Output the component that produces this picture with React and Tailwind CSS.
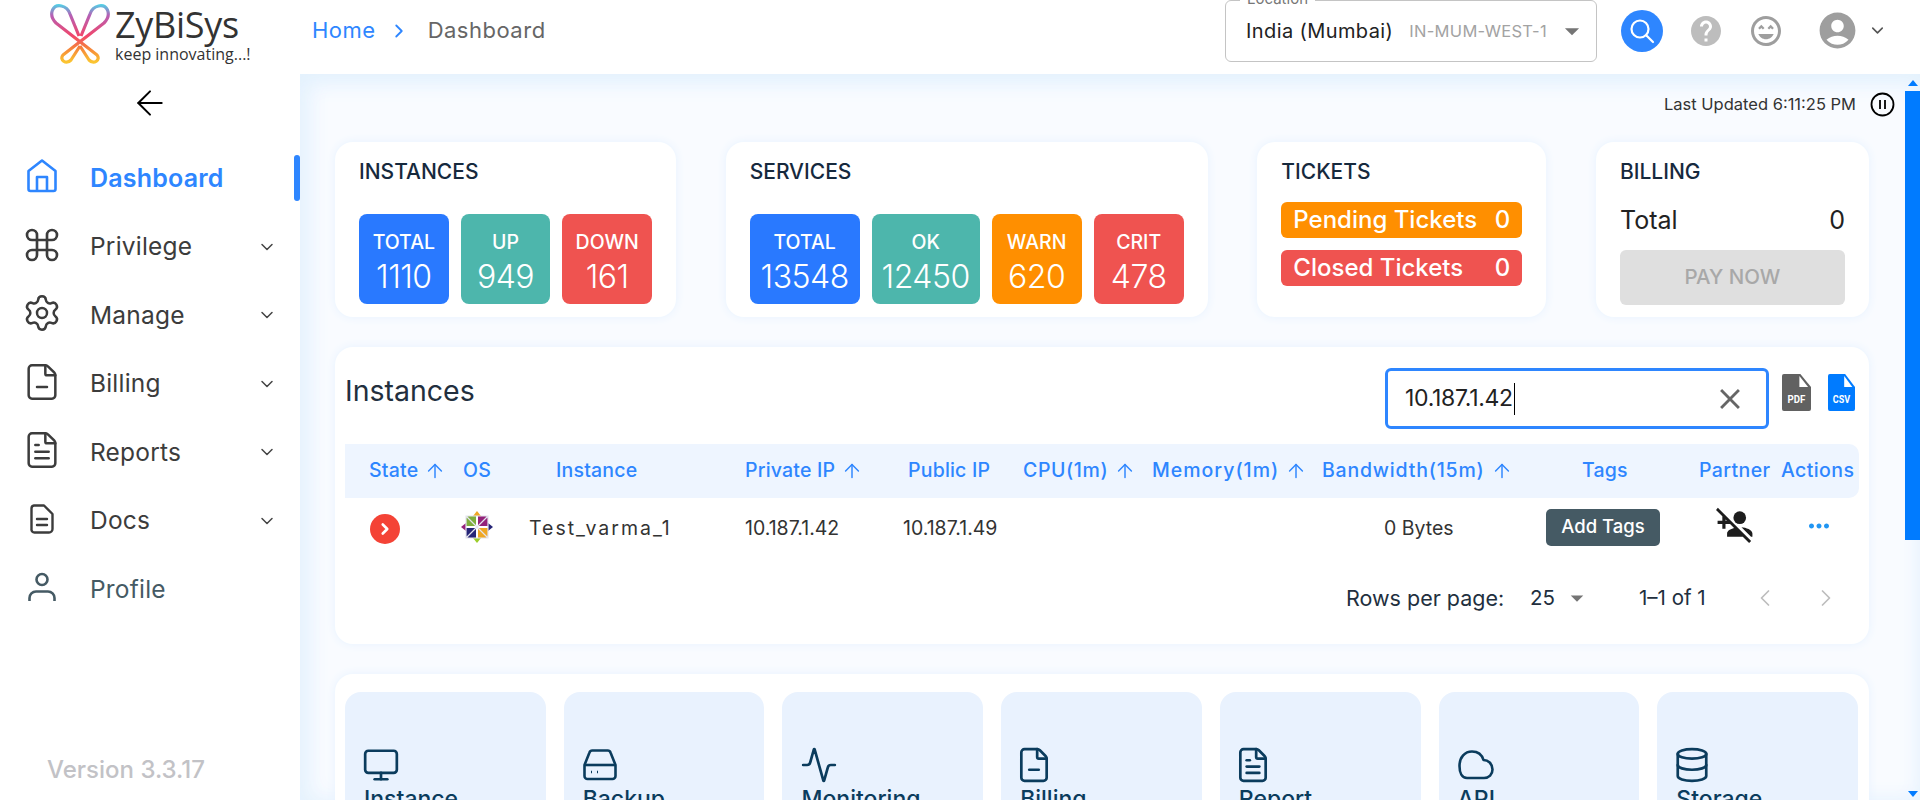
import React from 'react';
import { Command, Settings, FileMinus, FileText, ChevronDown, ChevronLeft, ChevronRight, ArrowLeft, ArrowUp, Monitor, Activity, Database } from 'lucide-react';
import { MdHelp, MdOutlineSentimentVerySatisfied, MdAccountCircle, MdArrowDropDown, MdClose, MdPersonAddDisabled, MdMoreHoriz } from 'react-icons/md';

const cols = 'grid grid-cols-[118px_67px_215px_158px_120px_129px_170px_224px_153px_84px_76px] items-center';

const Logo = () => (
  <svg width="62" height="62" viewBox="0 0 62 62" fill="none" strokeWidth="3.2" strokeLinejoin="round">
    <defs>
      <linearGradient id="zy" gradientUnits="userSpaceOnUse" x1="0" y1="2" x2="0" y2="60">
        <stop offset="0" stopColor="#4dd4e8" />
        <stop offset="0.2" stopColor="#b65fb4" />
        <stop offset="0.55" stopColor="#f0476c" />
        <stop offset="0.75" stopColor="#f5803c" />
        <stop offset="1" stopColor="#fbc531" />
      </linearGradient>
    </defs>
    <path stroke="url(#zy)" d="M29 34 L20 12 C17 3 6 1 2.500 8 C0.500 13 2 17 6 21 L47 53 C51 58 44 63 39 58 L30 44" />
    <path stroke="url(#zy)" d="M31 34 L40 12 C43 3 54 1 57.500 8 C59.500 13 58 17 54 21 L13 53 C9 58 16 63 21 58 L30 44" />
  </svg>
);

const HomeIcon = () => (
  <svg width="30" height="34" viewBox="0 0 30 34" fill="none" stroke="#2e86ff" strokeWidth="2.6" strokeLinejoin="round">
    <path d="M1.500 12 L15 1.500 L28.500 12 V30 a2 2 0 0 1 -2 2 H3.500 a2 2 0 0 1 -2 -2 Z" />
    <path d="M10 32 V18 H20 V32" />
  </svg>
);

const DocsIcon = () => (
  <svg width="24" height="30" viewBox="0 0 24 30" fill="none" stroke="#3c3c3c" strokeWidth="2.4" strokeLinejoin="round" strokeLinecap="round">
    <path d="M4 1.500 H14 L22.500 10 V25 a3.500 3.500 0 0 1 -3.500 3.500 H4.500 A3 3 0 0 1 1.500 25 V4.500 A3 3 0 0 1 4 1.500 Z" />
    <path d="M7 15 H17 M7 21 H17" />
  </svg>
);

const ProfileIcon = () => (
  <svg width="28" height="30" viewBox="0 0 28 30" fill="none" stroke="#455a64" strokeWidth="2.6">
    <circle cx="14" cy="7.500" r="5.500" />
    <path d="M1.500 29 V26 a6.500 6.500 0 0 1 6.500 -6.500 H20 a6.500 6.500 0 0 1 6.500 6.500 V29" />
  </svg>
);

const SearchIcon = () => (
  <svg width="26" height="26" viewBox="0 0 26 26" fill="none" stroke="#fff" strokeWidth="2.200" strokeLinecap="round">
    <circle cx="11" cy="11" r="8.500" />
    <path d="M17.500 17.500 L24 24" />
  </svg>
);

const PauseRing = () => (
  <svg width="25" height="25" viewBox="0 0 25 25" fill="none" stroke="#000" strokeWidth="1.800">
    <circle cx="12.500" cy="12.500" r="11" />
    <path d="M10 8 V17 M15 8 V17" />
  </svg>
);

const CentOS = () => (
  <svg width="32" height="32" viewBox="0 0 32 32">
    <path fill="#efa724" d="M16 0 L20 5 H12 Z" />
    <path fill="#9ccd2a" d="M16 32 L12 27 H20 Z" />
    <path fill="#932279" d="M0 16 L5 12 V20 Z" />
    <path fill="#262577" d="M32 16 L27 20 V12 Z" />
    <rect x="5" y="5" width="10" height="10" fill="#7fae3c" />
    <rect x="17" y="5" width="10" height="10" fill="#932279" />
    <rect x="5" y="17" width="10" height="10" fill="#262577" />
    <rect x="17" y="17" width="10" height="10" fill="#efa724" />
    <path stroke="#e4e4ee" strokeWidth="1.200" fill="none" d="M5 5 L27 27 M27 5 L5 27 M5 5 H27 V27 H5 Z" />
  </svg>
);

const FileBadge = ({ bg, label, width }) => (
  <svg width={width} height="37" viewBox="0 0 30 37" preserveAspectRatio="none">
    <path fill={bg} d="M2 0 H19 L30 13 V35 a2 2 0 0 1 -2 2 H2 a2 2 0 0 1 -2 -2 V2 a2 2 0 0 1 2 -2 Z" />
    <path fill="#fff" d="M18 2 L27 13 H18 Z" />
    <text x="15" y="29" textAnchor="middle" fill="#fff" fontSize="10" fontWeight="700" fontFamily="Roboto, sans-serif">{label}</text>
  </svg>
);

const BackupIcon = () => (
  <svg width="34" height="32" viewBox="0 0 34 32" fill="none" stroke="#0b3c5d" strokeWidth="2.600" strokeLinejoin="round">
    <path d="M1.500 16 L6.500 3.500 a3 3 0 0 1 3 -2 H24.500 a3 3 0 0 1 3 2 L32.500 16 V27 a3 3 0 0 1 -3 3 H4.500 a3 3 0 0 1 -3 -3 Z" />
    <path d="M1.500 16 H32.500" />
    <path d="M8 23 H9 M14 23 H15" />
  </svg>
);

const CloudIcon = () => (
  <svg width="36" height="30" viewBox="0 0 36 30" fill="none" stroke="#0b3c5d" strokeWidth="2.600" strokeLinejoin="round">
    <path d="M9 28 C4 28 1.500 23 1.500 16 C1.500 7 7 1.500 14 1.500 C20 1.500 24 5 25.500 10 C30 10 34.500 13.500 34.500 19.500 C34.500 24.500 31 28 26 28 Z" />
  </svg>
);

const menu = [
  { label: 'Dashboard', icon: <HomeIcon />, active: true },
  { label: 'Privilege', icon: <Command size={40} strokeWidth={1.6} color="#3c3c3c" />, sub: true },
  { label: 'Manage', icon: <Settings size={42} strokeWidth={1.5} color="#3c3c3c" />, sub: true },
  { label: 'Billing', icon: <FileMinus size={40} strokeWidth={1.5} color="#3c3c3c" />, sub: true },
  { label: 'Reports', icon: <FileText size={40} strokeWidth={1.5} color="#3c3c3c" />, sub: true },
  { label: 'Docs', icon: <DocsIcon />, sub: true },
  { label: 'Profile', icon: <ProfileIcon />, muted: true },
];

const StatBox = ({ label, value, color, width }) => (
  <div className={`${color} ${width} h-[90px] rounded-lg text-white flex flex-col items-center justify-center pt-[7px]`}>
    <div className="text-[19.5px] font-medium leading-[24px]">{label}</div>
    <div className="text-[32px] font-light leading-[38px] tracking-[-0.5px] mt-[4px]">{value}</div>
  </div>
);

const Card = ({ className, children }) => (
  <div className={`bg-white rounded-[18px] shadow-[0_0_10px_#e6f2fe] ${className}`}>{children}</div>
);

const Title = ({ children }) => (
  <h3 className="text-[21px] font-medium text-[#16293d] leading-[30px]">{children}</h3>
);

const HeadCell = ({ children, arrow, className = 'tracking-[0.2px]' }) => (
  <div className={`flex items-center text-[19.5px] font-medium text-[#2e86ff] whitespace-nowrap ${className}`}>
    {children}
    {arrow && <ArrowUp size={22} strokeWidth={1.6} className="ml-[6px]" />}
  </div>
);

const tiles = [
  { label: 'Instance', icon: <Monitor size={38} strokeWidth={1.7} color="#0b3c5d" className="-ml-[2px]" /> },
  { label: 'Backup', icon: <BackupIcon /> },
  { label: 'Monitoring', icon: <Activity size={38} strokeWidth={1.7} color="#0b3c5d" className="-ml-[1px]" /> },
  { label: 'Billing', icon: <FileMinus size={38} strokeWidth={1.7} color="#0b3c5d" className="-ml-[5px]" /> },
  { label: 'Report', icon: <FileText size={38} strokeWidth={1.7} color="#0b3c5d" className="-ml-[5px]" /> },
  { label: 'API', icon: <CloudIcon /> },
  { label: 'Storage', icon: <Database size={38} strokeWidth={1.7} color="#0b3c5d" className="-ml-[3px]" /> },
];

export default function App() {
  return (
    <div className="h-[800px] overflow-hidden flex flex-col bg-white font-[Inter,sans-serif] text-[#222]">
      <header className="h-[74px] shrink-0 flex">
        <div className="w-[312px] shrink-0 pl-[50px] pt-[2px] flex">
          <Logo />
          <div className="ml-[3px] font-['Open_Sans',sans-serif] text-[#333]">
            <div className="text-[36px] h-[38px] leading-[38px] mt-[4px] tracking-[-0.3px]">ZyBiSys</div>
            <div className="text-[16px] h-[16px] leading-[16px] mt-[2px] whitespace-nowrap">keep innovating...!</div>
          </div>
        </div>
        <nav className="flex items-center h-[61px] text-[22px] tracking-[0.5px]">
          <span className="text-[#2e86ff]">Home</span>
          <ChevronRight size={22} className="text-[#2e86ff] ml-[12px] mr-[18px]" />
          <span className="text-[#666]">Dashboard</span>
        </nav>
        <div className="ml-auto flex items-start">
          <div className="relative w-[372px] h-[62px] border border-[#c4c4c4] rounded-[6px] flex items-center pl-[20px] pr-[16px]">
            <span className="absolute left-[14px] -top-[11px] bg-white px-[7px] text-[15px] leading-[18px] text-[#777]">Location</span>
            <span className="text-[20px] tracking-[0.4px] whitespace-nowrap">India (Mumbai)</span>
            <span className="text-[16.5px] tracking-[0.3px] text-[#a3a3a3] ml-[16px] whitespace-nowrap">IN-MUM-WEST-1</span>
            <MdArrowDropDown size={34} className="text-[#757575] ml-auto -mr-[9px]" />
          </div>
          <div className="w-[42px] h-[42px] rounded-full bg-[#2e86ff] flex items-center justify-center ml-[24px] mt-[10px]"><SearchIcon /></div>
          <MdHelp size={36} className="text-[#bdbdbd] ml-[25px] mt-[13px]" />
          <MdOutlineSentimentVerySatisfied size={36} className="text-[#9e9e9e] ml-[24px] mt-[13px]" />
          <MdAccountCircle size={43} className="text-[#9e9e9e] ml-[32px] mt-[9px]" />
          <ChevronDown size={19} className="text-[#555] ml-[9px] mt-[21px] mr-[33px]" />
        </div>
      </header>

      <div className="flex-1 flex min-h-0">
        <aside className="w-[300px] shrink-0 relative">
          <div className="flex justify-center pt-[9px] h-[70px]">
            <ArrowLeft size={40} strokeWidth={1.2} className="text-black" />
          </div>
          <ul>
            {menu.map((m) => (
              <li key={m.label} className="relative h-[68.5px] flex items-center pl-[22px]">
                <span className="w-[40px] h-[44px] flex items-center justify-center shrink-0 -mt-[4px]">{m.icon}</span>
                <span className={`ml-[28px] ${m.active ? 'text-[#2e86ff] font-semibold text-[25px] tracking-[0.2px]' : m.muted ? 'text-[#455a64] text-[24.5px] tracking-[0.2px]' : 'text-[#3c3c3c] text-[24.5px] tracking-[0.2px]'}`}>{m.label}</span>
                {m.sub && <ChevronDown size={20} strokeWidth={1.8} className="absolute left-[257px] text-[#444]" />}
                {m.active && <span className="absolute right-0 top-[11px] w-[6px] h-[46px] rounded-full bg-[#2e86ff]" />}
              </li>
            ))}
          </ul>
          <div className="absolute left-[47px] top-[678px] text-[24px] font-medium text-[#c2c2c6]">Version 3.3.17</div>
        </aside>

        <main className="flex-1 flex min-w-0 bg-[#f9fbff] shadow-[inset_0_8px_22px_#e3f1fd,inset_10px_0_22px_#e9f4fe]">
          <div className="flex-1 min-w-0 pl-[35px] pr-[36px] pt-[18px]">
            <div className="h-[24px] flex items-center justify-end text-[16.500px] text-[#333] -mr-[26px]">
              <span className="whitespace-nowrap">Last Updated 6:11:25 PM</span>
              <span className="ml-[14px]"><PauseRing /></span>
            </div>

            <div className="flex justify-between mt-[26px]">
              <Card className="w-[341px] h-[175px] pt-[15px] px-[24px]">
                <Title>INSTANCES</Title>
                <div className="flex gap-[12px] mt-[27px]">
                  <StatBox label="TOTAL" value="1110" color="bg-[#2979ff]" width="w-[90px]" />
                  <StatBox label="UP" value="949" color="bg-[#4db6ac]" width="w-[90px]" />
                  <StatBox label="DOWN" value="161" color="bg-[#ef5350]" width="w-[90px]" />
                </div>
              </Card>
              <Card className="w-[482px] h-[175px] pt-[15px] px-[24px]">
                <Title>SERVICES</Title>
                <div className="flex gap-[12px] mt-[27px]">
                  <StatBox label="TOTAL" value="13548" color="bg-[#2979ff]" width="w-[110px]" />
                  <StatBox label="OK" value="12450" color="bg-[#4db6ac]" width="w-[108px]" />
                  <StatBox label="WARN" value="620" color="bg-[#ff8f00]" width="w-[90px]" />
                  <StatBox label="CRIT" value="478" color="bg-[#ef5350]" width="w-[90px]" />
                </div>
              </Card>
              <Card className="w-[289px] h-[175px] pt-[15px] px-[24px]">
                <Title>TICKETS</Title>
                <div className="h-[36px] mt-[15px] rounded-[6px] bg-[#ff8f00] text-white text-[24px] font-medium flex items-center justify-between px-[12px]">
                  <span className="whitespace-nowrap">Pending Tickets</span><span>0</span>
                </div>
                <div className="h-[36px] mt-[12px] rounded-[6px] bg-[#ef5350] text-white text-[24px] font-medium flex items-center justify-between px-[12px]">
                  <span className="whitespace-nowrap">Closed Tickets</span><span>0</span>
                </div>
              </Card>
              <Card className="w-[273px] h-[175px] pt-[15px] px-[24px]">
                <Title>BILLING</Title>
                <div className="flex justify-between items-center mt-[16px] h-[36px] text-[25px] text-[#222]">
                  <span>Total</span><span>0</span>
                </div>
                <div className="h-[55px] mt-[11px] rounded-[6px] bg-[#dfdfdf] text-[#a8a8a8] text-[20.5px] font-medium flex items-center justify-center">PAY NOW</div>
              </Card>
            </div>

            <Card className="h-[297px] mt-[30px] pl-[10px] pr-[10px] pt-[21px]">
              <div className="flex items-start h-[76px]">
                <h2 className="text-[28.500px] leading-[46px] text-[#222f3e]">Instances</h2>
                <div className="ml-auto flex items-center w-[384px] h-[61px] border-[3px] border-[#2e86ff] rounded-[6px] pl-[17px] pr-[19px]">
                  <span className="text-[23px] tracking-[-0.3px] text-[#222]">10.187.1.42</span>
                  <span className="w-px h-[32px] bg-black ml-[1px]" />
                  <MdClose size={34} className="ml-auto text-[#666]" />
                </div>
                <div className="ml-[13px] mt-[6px]"><FileBadge bg="#616161" label="PDF" width="29" /></div>
                <div className="ml-[17px] mt-[6px] mr-[4px]"><FileBadge bg="#007bff" label="CSV" width="27" /></div>
              </div>
              <div className={`${cols} h-[54px] bg-[#eef5ff] rounded-r-[10px]`}>
                <HeadCell arrow className="pl-[24px] tracking-[0.2px]">State</HeadCell>
                <HeadCell>OS</HeadCell>
                <HeadCell className="pl-[26px] tracking-[0.2px]">Instance</HeadCell>
                <HeadCell arrow>Private IP</HeadCell>
                <HeadCell className="pl-[5px] tracking-[0.2px]">Public IP</HeadCell>
                <HeadCell arrow className="tracking-[0.6px]">CPU(1m)</HeadCell>
                <HeadCell arrow className="tracking-[1px]">Memory(1m)</HeadCell>
                <HeadCell arrow className="tracking-[0.8px]">Bandwidth(15m)</HeadCell>
                <HeadCell className="pl-[36px] tracking-[0.2px]">Tags</HeadCell>
                <HeadCell className="tracking-[0.4px]">Partner</HeadCell>
                <HeadCell className="-ml-[2px] tracking-[0.4px]">Actions</HeadCell>
              </div>
              <div className={`${cols} h-[62px] text-[19.500px] text-[#333]`}>
                <div className="pl-[25px]">
                  <div className="w-[30px] h-[30px] rounded-full bg-[#f44336] flex items-center justify-center -mt-[1px]">
                    <ChevronRight size={18} strokeWidth={3.5} className="text-white" />
                  </div>
                </div>
                <div className="-ml-[2px] -mt-[4px]"><CentOS /></div>
                <div className="tracking-[2px] -ml-[1px] whitespace-nowrap">Test_varma_1</div>
                <div>10.187.1.42</div>
                <div>10.187.1.49</div>
                <div />
                <div />
                <div className="pl-[62px]">0 Bytes</div>
                <div className="-mt-[4px]">
                  <div className="w-[114px] h-[37px] rounded-[5px] bg-[#455a64] text-white text-[18.500px] font-medium flex items-center justify-center whitespace-nowrap">Add Tags</div>
                </div>
                <div className="pl-[17px] -mt-[10px]"><MdPersonAddDisabled size={38} className="text-[#1d1d1d]" /></div>
                <div className="pl-[21px] -mt-[6px]"><MdMoreHoriz size={30} className="text-[#2196f3]" /></div>
              </div>
              <div className="flex items-center h-[76px] text-[20.500px] text-[#222f3e] pl-[1001px]">
                <span className="w-[184px] text-[21.500px] whitespace-nowrap">Rows per page:</span>
                <span className="w-[32px]">25</span>
                <MdArrowDropDown size={30} className="text-[#757575]" />
                <span className="ml-[47px] w-[112px] whitespace-nowrap">1–1 of 1</span>
                <ChevronLeft size={28} strokeWidth={1.5} className="text-[#bdbdbd]" />
                <ChevronRight size={28} strokeWidth={1.5} className="text-[#bdbdbd] ml-[33px]" />
              </div>
            </Card>

            <Card className="mt-[30px] h-[200px] pl-[10px] pr-[11px] pt-[18px]">
              <div className="grid grid-cols-7 gap-[18px]">
                {tiles.map((t) => (
                  <div key={t.label} className="bg-[#e9f2fe] rounded-[16px] h-[170px] pl-[19px] pt-[54px]">
                    <div className="h-[38px] flex items-center">{t.icon}</div>
                    <div className="text-[23px] font-medium text-[#0b3c5d] leading-[28px] mt-[1px]">{t.label}</div>
                  </div>
                ))}
              </div>
            </Card>
          </div>

          <div className="w-[15px] shrink-0 flex flex-col items-center pt-[6px] pb-[3px]">
            <span className="w-0 h-0 border-x-[5px] border-x-transparent border-b-[6px] border-b-[#007bff]" />
            <span className="w-[15px] h-[449px] bg-[#007bff] mt-[5px]" />
            <span className="w-0 h-0 border-x-[5px] border-x-transparent border-t-[6px] border-t-[#007bff] mt-auto" />
          </div>
        </main>
      </div>
    </div>
  );
}
